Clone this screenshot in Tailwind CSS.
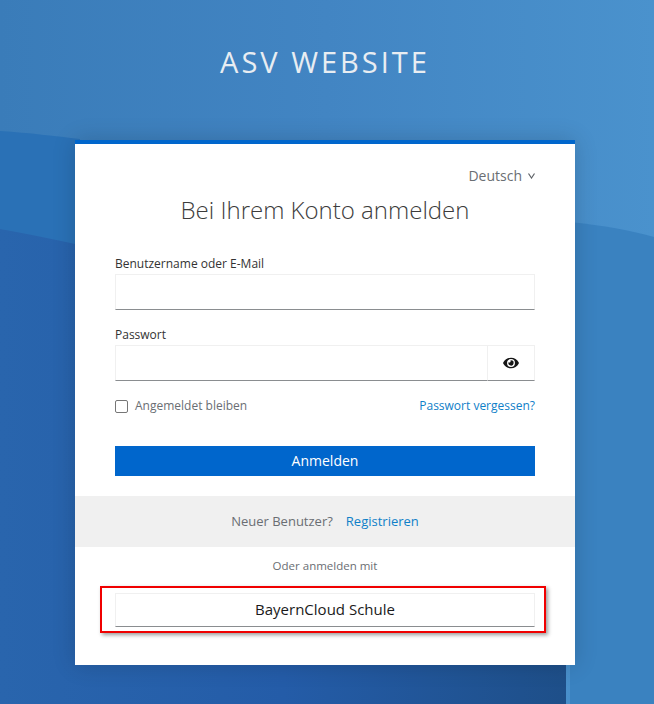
<!DOCTYPE html>
<html lang="de">
<head>
<meta charset="utf-8">
<title>ASV Website</title>
<script src="https://cdn.jsdelivr.net/npm/@tailwindcss/browser@4"></script>
</head>
<body class="font-['Open_Sans','Noto_Sans',sans-serif]">
<div class="relative w-[654px] h-[704px] overflow-hidden bg-[#3b80bd]">
  <svg class="absolute inset-0" width="654" height="704" viewBox="0 0 654 704" aria-hidden="true">
    <defs>
      <linearGradient id="top" x1="0" y1="0" x2="1" y2="0">
        <stop offset="0" stop-color="#3a7cb9"/>
        <stop offset="0.5" stop-color="#4285c3"/>
        <stop offset="1" stop-color="#4a92cd"/>
      </linearGradient>
      <linearGradient id="bottom" x1="0" y1="0" x2="1" y2="0">
        <stop offset="0" stop-color="#2965ad"/>
        <stop offset="0.5" stop-color="#245ca8"/>
        <stop offset="1" stop-color="#1e4f89"/>
      </linearGradient>
    </defs>
    <rect width="654" height="704" fill="url(#top)"/>
    <path d="M0 131 C30 133 55 136 80 139 L80 300 L0 300 Z" fill="#2a71b6"/>
    <path d="M570 222 C600 225 630 230 654 237 L654 704 L570 704 Z" fill="#3a82c0"/>
    <path d="M0 229 C30 234 55 240 80 245 L566 245 L566 704 L0 704 Z" fill="url(#bottom)"/>
  </svg>
  <div class="relative">
    <h1 class="h-[140px] pt-[42px] text-center text-[29px] leading-[40px] tracking-[3px] text-[#e8edf2] font-normal w-[650px]">ASV WEBSITE</h1>
    <main class="ml-[75px] w-[500px] h-[525px] bg-white border-t-4 border-[#0066cc] shadow-[0_0_22px_rgba(0,0,0,0.16)] flex flex-col">
      <div class="px-10 flex flex-col">
        <div class="flex justify-end items-center gap-[6px] pt-[20px] h-[43px] text-[14px] leading-5 text-[#6a6e73]">
          <span>Deutsch</span>
          <svg class="mt-[1px]" width="7" height="6" viewBox="0 0 7 6" fill="none" stroke="#5f6368" stroke-width="1.2"><path d="M0.5 0.5 L3.500 5 L6.500 0.500"/></svg>
        </div>
        <h2 class="text-center text-[24px] leading-[34px] font-light text-[#3c3c3c] mt-[6px]">Bei Ihrem Konto anmelden</h2>
        <label class="block mt-[28px] text-[12px] leading-[18px] text-[#333333]">Benutzername oder E-Mail</label>
        <div class="h-9 mt-[1px] border border-[#f0f0f0] border-b-[#8a8d90]"></div>
        <label class="block mt-[16px] text-[12px] leading-[18px] text-[#333333]">Passwort</label>
        <div class="flex h-9 mt-[1px]">
          <div class="flex-1 border border-[#f0f0f0] border-b-[#8a8d90]"></div>
          <div class="w-[48px] -ml-px flex items-center justify-center border border-[#f0f0f0] border-b-[#8a8d90]">
            <svg width="16" height="14" viewBox="0 0 576 512"><path fill="#151515" d="M572.52 241.4C518.29 135.59 410.93 64 288 64S57.68 135.64 3.48 241.41a32.35 32.35 0 0 0 0 29.19C57.71 376.41 165.07 448 288 448s230.32-71.64 284.52-177.41a32.35 32.35 0 0 0 0-29.19zM288 400a144 144 0 1 1 144-144 143.93 143.93 0 0 1-144 144zm0-240a95.31 95.31 0 0 0-25.31 3.79 47.85 47.85 0 0 1-66.9 66.9A95.78 95.78 0 1 0 288 160z"/></svg>
          </div>
        </div>
        <div class="flex items-center justify-between mt-[15px] h-5 text-[12px]">
          <label class="flex items-center gap-[7px] text-[#6a6e73]">
            <span class="w-[13px] h-[13px] rounded-[2px] border border-[#767676] bg-white"></span>
            <span>Angemeldet bleiben</span>
          </label>
          <a class="text-[#0f80c8]">Passwort vergessen?</a>
        </div>
        <button class="mt-[30px] h-[30px] bg-[#0066cc] text-white text-[14px] leading-[30px] text-center">Anmelden</button>
      </div>
      <div class="mt-5 h-[51px] bg-[#f0f0f0] flex items-center justify-center gap-[13px] text-[13px]">
        <span class="text-[#6a6e73]">Neuer Benutzer?</span>
        <a class="text-[#0f80c8]">Registrieren</a>
      </div>
      <p class="text-center text-[11.5px] leading-[18px] text-[#6a6e73] mt-[10px]">Oder anmelden mit</p>
      <div class="relative mx-10 mt-[18px] h-[34px] pb-[2px] border border-[#f0f0f0] border-b-[#8a8d90] flex items-center justify-center text-[15px] text-[#1a1a1a]">
        BayernCloud Schule
        <div class="absolute left-[-16px] top-[-8px] w-[446px] h-[47px] border-[2px] border-[#f00000] shadow-[2px_2px_4px_rgba(0,0,0,0.4)]"></div>
      </div>
    </main>
  </div>
</div>
</body>
</html>
